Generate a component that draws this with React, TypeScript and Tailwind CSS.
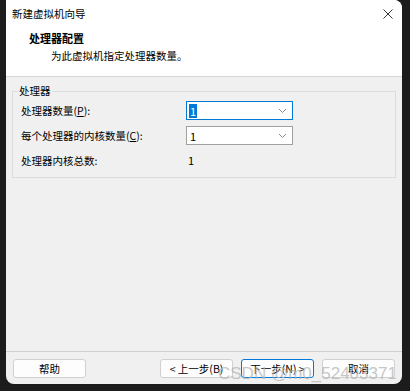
import React from "react";

const font = { fontFamily: '"Noto Sans CJK SC", "Noto Sans", sans-serif' };

function Chevron() {
  return (
    <svg width="9" height="6" viewBox="0 0 9 6" className="text-[#8a8a8a]">
      <path d="M1 1 L4.5 4.5 L8 1" fill="none" stroke="currentColor" strokeWidth="1" />
    </svg>
  );
}

function Combo({ focused }: { focused?: boolean }) {
  return (
    <div
      className={
        "flex h-[19px] w-[107px] items-center justify-between bg-white pl-[2px] pr-[5px] " +
        (focused ? "border border-[#0078d7]" : "border border-[#a0a0a0]")
      }
    >
      <span
        className={
          "px-[1px] text-[11px] leading-[14px] " +
          (focused ? "bg-[#0078d7] text-white" : "text-black")
        }
      >
        1
      </span>
      <Chevron />
    </div>
  );
}

function Btn({ children, primary }: { children: React.ReactNode; primary?: boolean }) {
  return (
    <div
      className={
        "flex h-[19px] w-[73px] items-center justify-center rounded-[3px] bg-[#fdfdfd] text-[10.5px] text-black " +
        (primary ? "border border-[#0078d7]" : "border border-[#d0d0d0]")
      }
    >
      {children}
    </div>
  );
}

export default function App() {
  return (
    <div className="relative h-[391px] w-[410px] overflow-hidden bg-[#1c1c1c]" style={font}>
      <div className="ml-[6px] flex h-[384px] w-[396px] flex-col overflow-hidden rounded-b-[8px] rounded-tr-[8px] bg-[#f0f0f0]">
        {/* header */}
        <div className="h-[77px] border-b border-[#d6d6d6] bg-white">
          <div className="flex h-[28px] items-center justify-between pl-[6px] pr-[9px]">
            <span className="text-[10.5px] text-black">新建虚拟机向导</span>
            <svg width="10" height="10" viewBox="0 0 10 10">
              <path d="M0.5 0.5 L9.5 9.5 M9.5 0.5 L0.5 9.5" stroke="#333" strokeWidth="1" />
            </svg>
          </div>
          <div className="pl-[23px] pt-[3px] text-[11px] font-bold leading-[14px] text-black">处理器配置</div>
          <div className="pl-[45px] pt-[4px] text-[10.5px] leading-[14px] text-black">为此虚拟机指定处理器数量。</div>
        </div>

        {/* group */}
        <div className="relative mx-[6px] mt-[14px] h-[87px] border border-[#dcdcdc]">
          <span className="absolute left-[5px] top-[-8px] bg-[#f0f0f0] px-[1px] text-[10.5px] leading-[14px] text-black">
            处理器
          </span>
          <div className="flex flex-col pl-[8px] pt-[9px] text-[10.5px] text-black">
            <div className="flex h-[19px] items-center">
              <span className="w-[165px]">
                处理器数量(<span className="underline">P</span>):
              </span>
              <Combo focused />
            </div>
            <div className="mt-[6px] flex h-[19px] items-center">
              <span className="w-[165px]">
                每个处理器的内核数量(<span className="underline">C</span>):
              </span>
              <Combo />
            </div>
            <div className="mt-[6px] flex h-[19px] items-center">
              <span className="w-[167px]">处理器内核总数:</span>
              <span className="text-[11px]">1</span>
            </div>
          </div>
        </div>

        <div className="flex-1" />

        {/* footer */}
        <div className="h-[33px] border-t border-[#d0d0d0] px-[7px] pt-[7px]">
          <div className="flex items-center">
            <Btn>帮助</Btn>
            <div className="flex-1" />
            <div className="flex gap-[8px]">
              <Btn>&lt; 上一步(B)</Btn>
              <Btn primary>下一步(N) &gt;</Btn>
              <Btn>取消</Btn>
            </div>
          </div>
        </div>
      </div>

      <div
        className="absolute left-[218px] top-[363px] whitespace-nowrap text-[17px] leading-[22px] text-[#b4b4b4]/75"
        style={{ fontFamily: '"Liberation Sans", Arial, sans-serif' }}
      >
        CSDN @m0_52403371
      </div>
    </div>
  );
}
